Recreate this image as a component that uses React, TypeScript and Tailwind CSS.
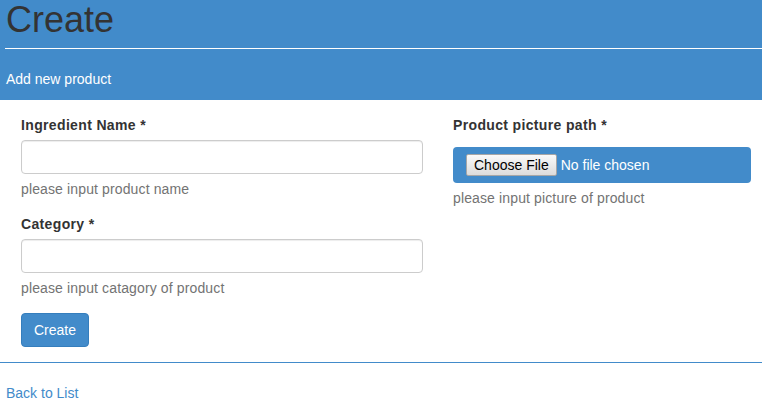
export default function App() {
  return (
    <div className="min-h-screen bg-white text-[14px] leading-[20px] text-[#333]" style={{ fontFamily: '"Liberation Sans", Arial, sans-serif' }}>
      {/* Header */}
      <div className="bg-[#428bca] pl-[5px] pb-[11px]">
        <h1 className="m-0 pl-[1px] text-[36px] leading-[40px] font-normal text-[#333]">Create</h1>
        <hr className="mt-[8px] border-0 border-t border-white" />
        <h4 className="mt-[20px] pl-[1px] text-[14px] leading-[20px] font-normal text-white">Add new product</h4>
      </div>

      {/* Form */}
      <div className="grid grid-cols-[402px_298px] gap-x-[30px] pl-[21px] pt-[15px]">
        <div className="flex flex-col">
          <label className="font-bold tracking-[0.35px]">Ingredient Name *</label>
          <input className="mt-[5px] h-[34px] rounded-[4px] border border-[#ccc] px-3 shadow-[inset_0_1px_1px_rgba(0,0,0,0.075)] outline-none" />
          <span className="mt-[5px] tracking-[0.13px] text-[#737373]">please input product name</span>

          <label className="mt-[15px] font-bold tracking-[0.35px]">Category *</label>
          <input className="mt-[5px] h-[34px] rounded-[4px] border border-[#ccc] px-3 shadow-[inset_0_1px_1px_rgba(0,0,0,0.075)] outline-none" />
          <span className="mt-[5px] tracking-[0.13px] text-[#737373]">please input catagory of product</span>

          <div className="mt-[15px]">
            <button className="h-[34px] rounded-[4px] border border-[#357ebd] bg-[#428bca] px-[12px] text-white">Create</button>
          </div>
        </div>

        <div className="flex flex-col">
          <label className="font-bold tracking-[0.35px]">Product picture path *</label>
          <div className="mt-[12px] flex h-[36px] items-center gap-[4px] rounded-[4px] bg-[#428bca] pl-[13px]">
            <span className="flex h-[22px] items-center rounded-[2px] border border-[#a6a6a6] bg-gradient-to-b from-[#fafafa] to-[#dcdcdc] px-[7px] text-black">Choose File</span>
            <span className="text-white">No file chosen</span>
          </div>
          <span className="mt-[5px] tracking-[0.13px] text-[#737373]">please input picture of product</span>
        </div>
      </div>

      <hr className="mt-[15px] border-0 border-t border-[#428bca]" />

      <div className="pl-[6px] pt-[20px]">
        <a href="#" className="text-[#428bca]">Back to List</a>
      </div>
    </div>
  )
}
